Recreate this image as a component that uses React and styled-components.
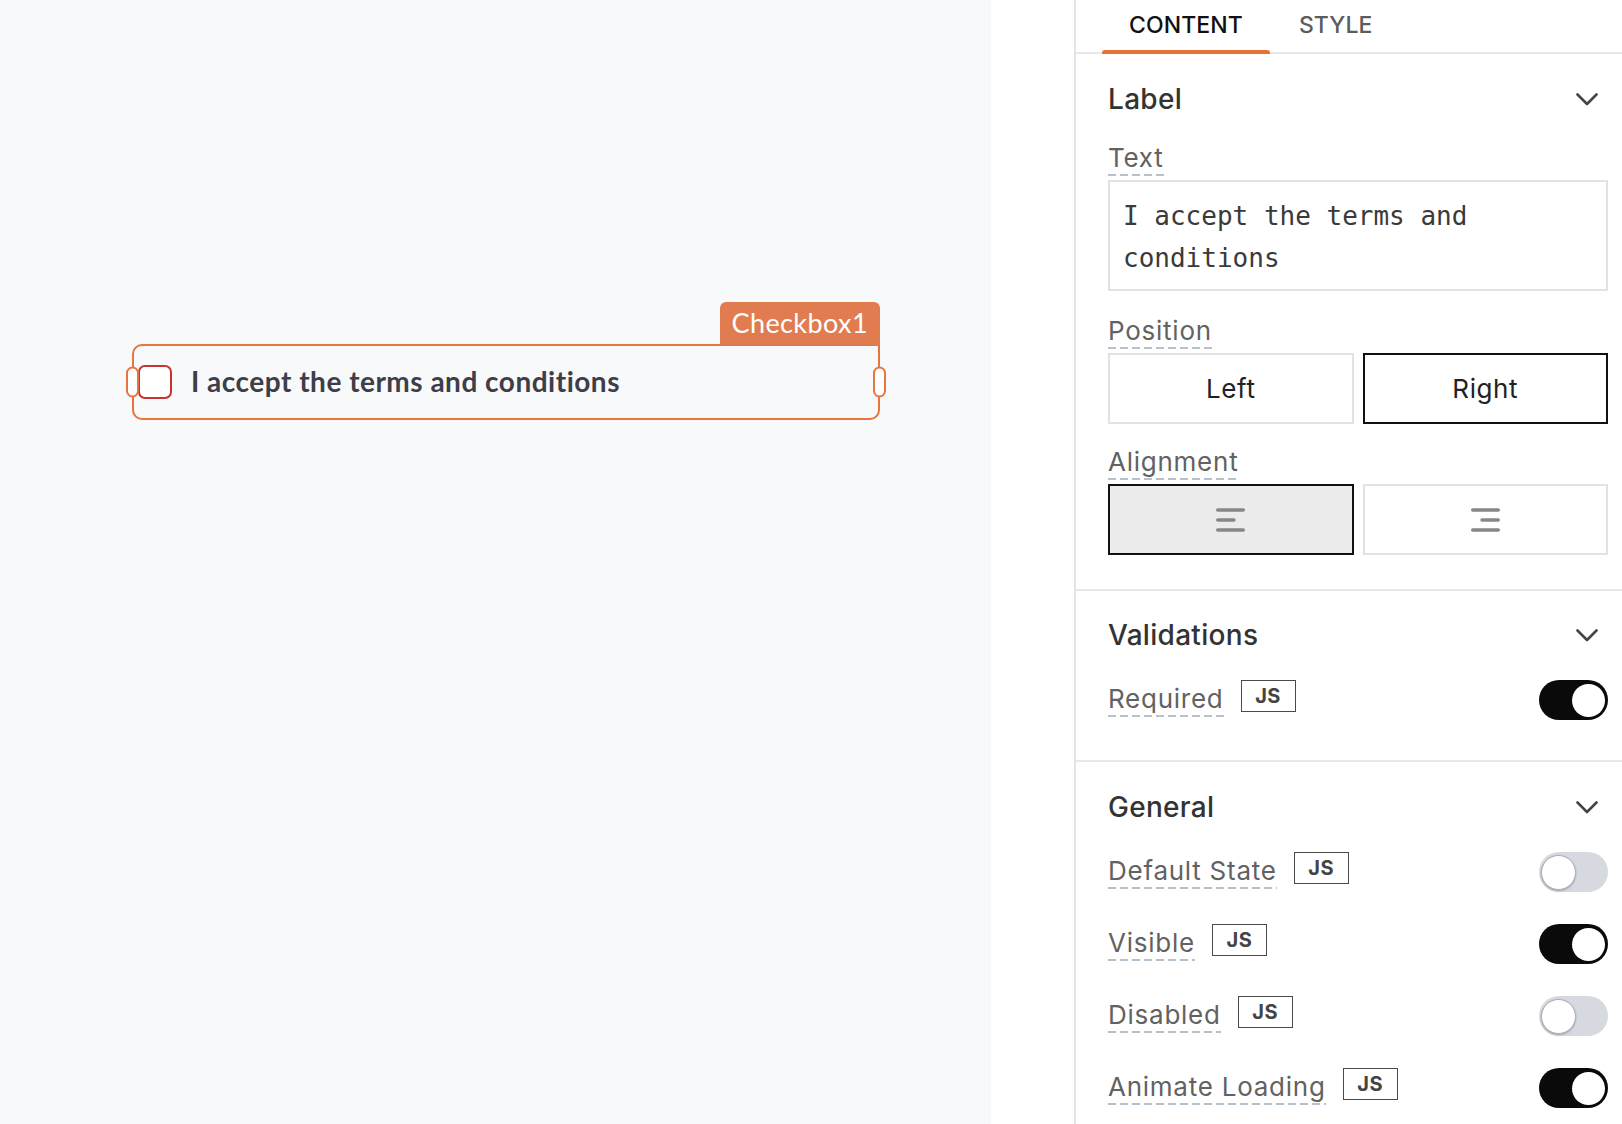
import React from 'react';
import styled, { createGlobalStyle } from 'styled-components';

const GlobalStyle = createGlobalStyle`
  html, body { margin: 0; padding: 0; }
  body { font-family: Inter, "Noto Sans", sans-serif; background: #ffffff; }
  *, *::before, *::after { box-sizing: border-box; }
`;

const Page = styled.div`
  display: flex;
  width: 1622px;
  height: 1124px;
  overflow: hidden;
`;

const Canvas = styled.main`
  flex: none;
  width: 991px;
  background: #f8f9fb;
  padding: 344px 0 0 132px;
`;

const Gutter = styled.div`
  flex: none;
  width: 83px;
  background: #ffffff;
`;

/* ---------- canvas widget ---------- */

const WidgetFrame = styled.div`
  position: relative;
  width: 748px;
  height: 76px;
  border: 2px solid #e8743f;
  border-radius: 10px 0 10px 10px;
  display: flex;
  align-items: center;
  padding-left: 4px;
`;

const NameTag = styled.div`
  position: absolute;
  right: -2px;
  bottom: calc(100% + 1px);
  height: 43px;
  padding: 0 12px;
  background: #e17c51;
  border-radius: 6px 6px 0 0;
  color: #ffffff;
  font-family: Lato, "Open Sans", sans-serif;
  font-size: 27px;
  line-height: 41px;
  letter-spacing: 0.4px;
`;

const Handle = styled.span`
  position: absolute;
  top: 50%;
  ${p => (p.$side === 'left' ? 'left: -8px;' : 'right: -8px;')}
  transform: translateY(-50%);
  width: 13px;
  height: 31px;
  border: 2px solid #e8743f;
  border-radius: 7px;
  background: #ffffff;
  z-index: 2;
`;

const CheckBox = styled.span`
  flex: none;
  width: 34px;
  height: 34px;
  border: 2px solid #c9332c;
  border-radius: 7px;
  background: #ffffff;
`;

const CheckLabel = styled.span`
  margin-left: 19px;
  padding-bottom: 2px;
  font-family: Lato, "Open Sans", sans-serif;
  font-weight: 700;
  font-size: 28px;
  color: #3d3e48;
  letter-spacing: 0.5px;
`;

/* ---------- property panel ---------- */

const Panel = styled.aside`
  flex: 1;
  border-left: 2px solid #e4e4e4;
  background: #ffffff;
  display: flex;
  flex-direction: column;
`;

const TabBar = styled.div`
  flex: none;
  display: flex;
  gap: 2px;
  height: 54px;
  padding-left: 26px;
  border-bottom: 2px solid #e8e8e8;
`;

const Tab = styled.div`
  position: relative;
  height: 52px;
  padding: 13px 27px 0;
  font-size: 23px;
  line-height: 24px;
  font-weight: 500;
  letter-spacing: 0.1px;
  color: ${p => (p.$active ? '#111111' : '#5c5c5c')};
  &::after {
    content: '';
    display: ${p => (p.$active ? 'block' : 'none')};
    position: absolute;
    left: 0;
    right: 0;
    bottom: -2px;
    height: 4px;
    background: #e8703b;
    border-radius: 3px 3px 0 0;
  }
`;

const Section = styled.section`
  flex: none;
  display: flex;
  flex-direction: column;
  padding: ${p => p.$pt}px 14px ${p => p.$pb}px 32px;
  border-bottom: ${p => (p.$last ? 'none' : '2px solid #e8e8e8')};
`;

const SectionHeader = styled.div`
  display: flex;
  align-items: center;
  justify-content: space-between;
  height: 34px;
`;

const SectionTitle = styled.h3`
  margin: 0;
  font-size: 28px;
  line-height: 34px;
  font-weight: 500;
  color: #333333;
  letter-spacing: 0.3px;
`;

const Chevron = styled.svg`
  margin-right: 10px;
`;

const Field = styled.div`
  display: flex;
  flex-direction: column;
  align-items: flex-start;
  gap: 4px;
  margin-top: ${p => p.$mt}px;
`;

const PropLabel = styled.span`
  display: inline-block;
  font-size: 26px;
  line-height: 32px;
  color: #626262;
  letter-spacing: 0.75px;
  padding-bottom: 2px;
  background: repeating-linear-gradient(to right, #b7c1cb 0 8px, transparent 8px 12px) left bottom / 100% 2px no-repeat;
  ${p => p.$offset && `margin-top: ${p.$offset}px;`}
`;

const CodeBox = styled.div`
  align-self: stretch;
  border: 2px solid #e2e2e2;
  padding: 13px 13px 10px;
  font-family: "DejaVu Sans Mono", "Liberation Mono", monospace;
  font-size: 26px;
  line-height: 42px;
  color: #3a3a3a;
`;

const SegmentGroup = styled.div`
  align-self: stretch;
  display: grid;
  grid-template-columns: 1fr 1fr;
  gap: 9px;
`;

const Segment = styled.button`
  height: 71px;
  border: 2px solid ${p => (p.$active ? '#111111' : '#e2e2e2')};
  background: ${p => (p.$filled ? '#ececec' : '#ffffff')};
  display: flex;
  align-items: center;
  justify-content: center;
  font-family: Inter, sans-serif;
  font-size: 26px;
  letter-spacing: 0.6px;
  color: #222222;
  padding: 0;
  cursor: pointer;
`;

const RowList = styled.div`
  display: flex;
  flex-direction: column;
  gap: 32px;
  margin-top: 28px;
`;

const ToggleRow = styled.div`
  display: flex;
  align-items: flex-start;
  justify-content: space-between;
  height: 40px;
`;

const RowLabelGroup = styled.div`
  display: flex;
  align-items: flex-start;
  gap: 17px;
`;

const JsBadge = styled.span`
  display: flex;
  align-items: center;
  justify-content: center;
  width: 55px;
  height: 32px;
  border: 1.5px solid #4a4a4a;
  font-size: 20px;
  font-weight: 700;
  color: #444444;
  letter-spacing: 0.5px;
`;

const Switch = styled.span`
  flex: none;
  display: flex;
  align-items: center;
  justify-content: ${p => (p.$on ? 'flex-end' : 'flex-start')};
  width: 69px;
  height: 40px;
  border-radius: 20px;
  padding: ${p => (p.$on ? '0 3px' : '0 2px')};
  background: ${p => (p.$on ? '#0a0a0a' : '#d6dae0')};
`;

const Knob = styled.span`
  width: ${p => (p.$on ? 33 : 35)}px;
  height: ${p => (p.$on ? 33 : 35)}px;
  border-radius: 50%;
  background: #ffffff;
  ${p => !p.$on && 'border: 1.5px solid #a9aeb4; box-shadow: 0 1px 2px rgba(0,0,0,0.25);'}
`;

const ChevronDown = () => (
  <Chevron width="22" height="13" viewBox="0 0 22 13" fill="none">
    <polyline points="1.5,1.5 11,11 20.5,1.5" stroke="#444" strokeWidth="2.6" strokeLinecap="round" strokeLinejoin="round" />
  </Chevron>
);

const AlignIcon = ({ right }) => (
  <svg width="29" height="24" viewBox="0 0 29 24">
    <line x1="1.7" y1="2" x2="27.3" y2="2" stroke="#878787" strokeWidth="3.4" strokeLinecap="round" />
    {right ? (
      <line x1="11" y1="12" x2="27.3" y2="12" stroke="#878787" strokeWidth="3.4" strokeLinecap="round" />
    ) : (
      <line x1="1.7" y1="12" x2="18" y2="12" stroke="#878787" strokeWidth="3.4" strokeLinecap="round" />
    )}
    <line x1="1.7" y1="22" x2="27.3" y2="22" stroke="#878787" strokeWidth="3.4" strokeLinecap="round" />
  </svg>
);

const PropToggle = ({ label, on }) => (
  <ToggleRow>
    <RowLabelGroup>
      <PropLabel $offset={3}>{label}</PropLabel>
      <JsBadge>JS</JsBadge>
    </RowLabelGroup>
    <Switch $on={on}>
      <Knob $on={on} />
    </Switch>
  </ToggleRow>
);

export default function App() {
  return (
    <>
      <GlobalStyle />
      <Page>
        <Canvas>
          <WidgetFrame>
            <NameTag>Checkbox1</NameTag>
            <Handle $side="left" />
            <CheckBox />
            <CheckLabel>I accept the terms and conditions</CheckLabel>
            <Handle $side="right" />
          </WidgetFrame>
        </Canvas>
        <Gutter />
        <Panel>
          <TabBar>
            <Tab $active>CONTENT</Tab>
            <Tab>STYLE</Tab>
          </TabBar>

          <Section $pt={28} $pb={34}>
            <SectionHeader>
              <SectionTitle>Label</SectionTitle>
              <ChevronDown />
            </SectionHeader>
            <Field $mt={26}>
              <PropLabel>Text</PropLabel>
              <CodeBox>I accept the terms and conditions</CodeBox>
            </Field>
            <Field $mt={24}>
              <PropLabel>Position</PropLabel>
              <SegmentGroup>
                <Segment>Left</Segment>
                <Segment $active>Right</Segment>
              </SegmentGroup>
            </Field>
            <Field $mt={22}>
              <PropLabel>Alignment</PropLabel>
              <SegmentGroup>
                <Segment $active $filled><AlignIcon /></Segment>
                <Segment><AlignIcon right /></Segment>
              </SegmentGroup>
            </Field>
          </Section>

          <Section $pt={27} $pb={40}>
            <SectionHeader>
              <SectionTitle>Validations</SectionTitle>
              <ChevronDown />
            </SectionHeader>
            <RowList>
              <PropToggle label="Required" on />
            </RowList>
          </Section>

          <Section $pt={28} $pb={20} $last>
            <SectionHeader>
              <SectionTitle>General</SectionTitle>
              <ChevronDown />
            </SectionHeader>
            <RowList>
              <PropToggle label="Default State" />
              <PropToggle label="Visible" on />
              <PropToggle label="Disabled" />
              <PropToggle label="Animate Loading" on />
            </RowList>
          </Section>
        </Panel>
      </Page>
    </>
  );
}
